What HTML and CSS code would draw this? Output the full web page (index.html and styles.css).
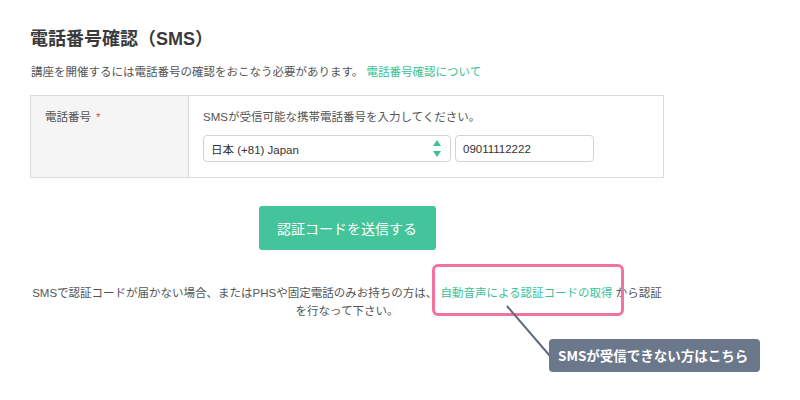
FILE: index.html
```html
<!DOCTYPE html>
<html lang="ja">
<head>
<meta charset="utf-8">
<title>電話番号確認（SMS）</title>
<link rel="stylesheet" href="styles.css">
</head>
<body>
<main class="page">
  <h1 class="title">電話番号確認（SMS）</h1>
  <p class="desc">講座を開催するには電話番号の確認をおこなう必要があります。 <a class="link" href="#">電話番号確認について</a></p>
  <div class="form-table">
    <div class="label-cell">電話番号<span class="req">*</span></div>
    <div class="field-cell">
      <p class="hint">SMSが受信可能な携帯電話番号を入力してください。</p>
      <div class="inputs">
        <div class="select">
          <span>日本 (+81) Japan</span>
          <svg class="arrows" width="8" height="18" viewBox="0 0 8 18"><path d="M4 0 L8 6 L0 6 Z M0 11 L8 11 L4 17 Z" fill="#3fc196"/></svg>
        </div>
        <div class="input">09011112222</div>
      </div>
    </div>
  </div>
  <div class="btn-row"><button class="btn">認証コードを送信する</button></div>
  <p class="note">SMSで認証コードが届かない場合、またはPHSや固定電話のみお持ちの方は、 <a class="link" href="#">自動音声による認証コードの取得</a> から認証<br>を行なって下さい。</p>
</main>
<div class="highlight"></div>
<svg class="connector" width="800" height="400" viewBox="0 0 800 400"><line x1="507" y1="306" x2="550" y2="356" stroke="#5f6a7d" stroke-width="2"/></svg>
<div class="tooltip">SMSが受信できない方はこちら</div>
</body>
</html>
```
FILE: styles.css
```css
html, body { margin: 0; padding: 0; background: #fff; }
body {
  font-family: "Liberation Sans", "Noto Sans CJK JP", sans-serif;
  color: #555;
  width: 800px;
  height: 400px;
  overflow: hidden;
  position: relative;
}
.page { padding: 27px 0 0 30px; width: 634px; }
.title {
  margin: 0;
  font-size: 18px;
  line-height: 24px;
  font-weight: bold;
  color: #3a3a3a;
}
.desc {
  margin: 12px 0 0 1px;
  font-size: 11.5px;
  line-height: 18px;
  color: #555;
}
.link { color: #3dbf95; text-decoration: none; }
.form-table {
  margin-top: 14px;
  border: 1px solid #dcdcdc;
  display: flex;
  height: 81px;
}
.label-cell {
  width: 143px;
  background: #f5f5f5;
  border-right: 1px solid #dcdcdc;
  padding: 12px 0 0 14px;
  font-size: 11.5px;
  line-height: 18px;
  color: #555;
}
.req { color: #e8475f; margin-left: 5px; }
.field-cell { padding: 12px 0 0 14px; flex: 1; }
.hint { margin: 0; font-size: 11.5px; line-height: 18px; color: #555; }
.inputs { display: flex; gap: 4px; margin-top: 9px; }
.select, .input {
  box-sizing: border-box;
  height: 27px;
  border: 1px solid #d4d4d4;
  border-radius: 4px;
  font-size: 11.5px;
  color: #333;
  display: flex;
  align-items: center;
}
.select {
  width: 248px;
  padding: 0 9px 0 7px;
  justify-content: space-between;
}
.arrows { display: block; }
.input { width: 139px; padding: 0 7px; }
.btn-row { display: flex; justify-content: center; margin-top: 28px; }
.btn {
  width: 177px;
  height: 44px;
  border: none;
  border-radius: 3px;
  background: #43c49a;
  color: #fff;
  font-family: "Liberation Sans", "Noto Sans CJK JP", sans-serif;
  font-size: 14px;
}
.note {
  margin: 34px 0 0;
  text-align: center;
  font-size: 11.5px;
  line-height: 18px;
  color: #555;
}
.highlight {
  position: absolute;
  left: 432px;
  top: 264px;
  width: 186px;
  height: 46px;
  border: 3px solid #f2739b;
  border-radius: 6px;
}
.connector { position: absolute; left: 0; top: 0; }
.tooltip {
  position: absolute;
  left: 549px;
  top: 339px;
  width: 211px;
  height: 33px;
  box-sizing: border-box;
  padding-left: 9px;
  background: #6b778a;
  border-radius: 4px;
  color: #fff;
  font-family: "Noto Sans CJK JP", sans-serif;
  font-weight: bold;
  font-size: 13.5px;
  line-height: 33px;
  white-space: nowrap;
}
```
